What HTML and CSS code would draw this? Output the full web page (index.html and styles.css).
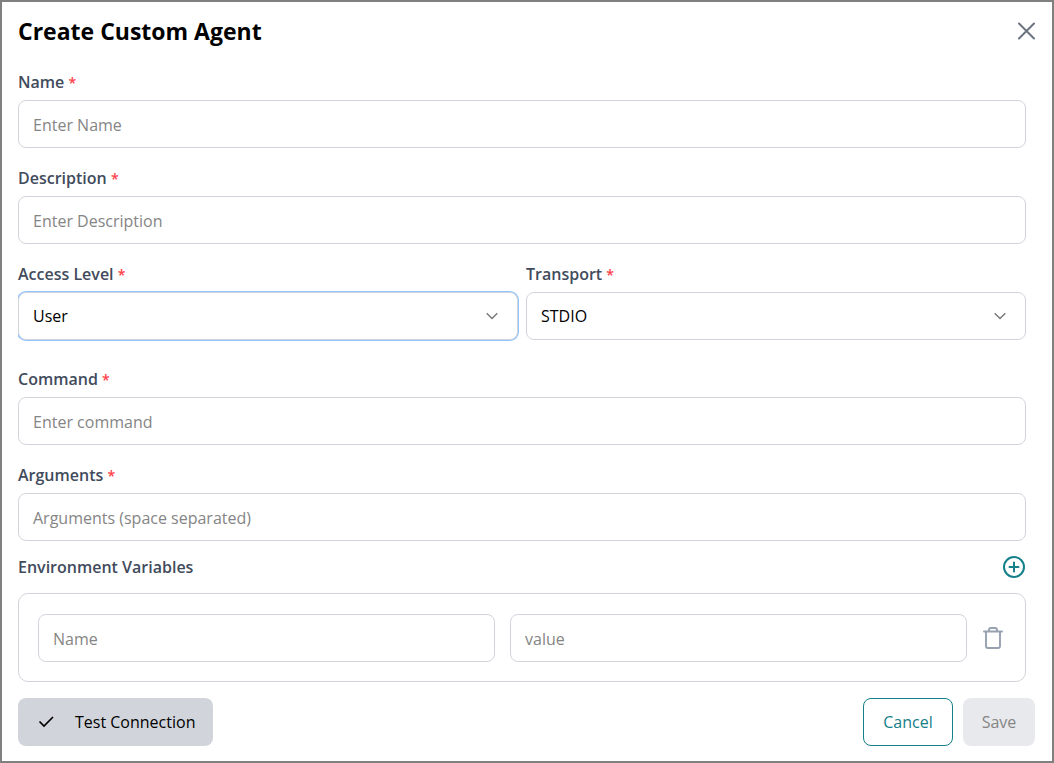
FILE: index.html
```html
<!DOCTYPE html>
<html lang="en">
<head>
<meta charset="utf-8">
<meta name="viewport" content="width=device-width, initial-scale=1">
<title>Create Custom Agent</title>
<link rel="stylesheet" href="styles.css">
</head>
<body>
<main class="dialog">
  <header class="dialog-header">
    <h1 class="title">Create Custom Agent</h1>
    <button class="icon-button close" type="button" aria-label="Close">
      <svg width="18" height="18" viewBox="0 0 18 18" fill="none" stroke="currentColor" stroke-width="2" stroke-linecap="round"><path d="M2 1.500l15 15M17 1.500l-15 15"/></svg>
    </button>
  </header>
  <form class="form">
    <div class="fields">
      <div class="field">
        <label class="label" for="name">Name <span class="required">*</span></label>
        <input class="control" id="name" type="text" placeholder="Enter Name">
      </div>
      <div class="field">
        <label class="label" for="description">Description <span class="required">*</span></label>
        <input class="control" id="description" type="text" placeholder="Enter Description">
      </div>
      <div class="field-row">
        <div class="field">
          <label class="label" for="access">Access Level <span class="required">*</span></label>
          <div class="select-wrap">
            <select class="control select active" id="access"><option>User</option></select>
            <svg class="chevron" width="12" height="8" viewBox="0 0 12 8" fill="none" stroke="currentColor" stroke-width="1.400"><path d="M.7 1.200L6 6.500l5.300-5.300"/></svg>
          </div>
        </div>
        <div class="field">
          <label class="label" for="transport">Transport <span class="required">*</span></label>
          <div class="select-wrap">
            <select class="control select" id="transport"><option>STDIO</option></select>
            <svg class="chevron" width="12" height="8" viewBox="0 0 12 8" fill="none" stroke="currentColor" stroke-width="1.400"><path d="M.7 1.200L6 6.500l5.300-5.300"/></svg>
          </div>
        </div>
      </div>
      <div class="field">
        <label class="label" for="command">Command <span class="required">*</span></label>
        <input class="control" id="command" type="text" placeholder="Enter command">
      </div>
      <div class="field">
        <label class="label" for="arguments">Arguments <span class="required">*</span></label>
        <input class="control" id="arguments" type="text" placeholder="Arguments (space separated)">
      </div>
    </div>
    <section class="env">
      <div class="env-header">
        <h2 class="label">Environment Variables</h2>
        <button class="icon-button add" type="button" aria-label="Add variable">
          <svg width="24" height="24" viewBox="0 0 24 24" fill="none" stroke="currentColor" stroke-width="2" stroke-linecap="round"><circle cx="12" cy="12" r="10"/><path d="M12 7.500v9M7.500 12h9"/></svg>
        </button>
      </div>
      <div class="env-box">
        <input class="control" type="text" placeholder="Name" aria-label="Variable name">
        <input class="control" type="text" placeholder="value" aria-label="Variable value">
        <button class="icon-button trash" type="button" aria-label="Delete variable">
          <svg width="24" height="24" viewBox="0 0 24 24" fill="none" stroke="currentColor" stroke-width="1.900" stroke-linecap="round" stroke-linejoin="round"><path d="M2 5.500h18M4 5.500v14.500a2 2 0 0 0 2 2h10a2 2 0 0 0 2-2V5.500M7 5.500V4a2 2 0 0 1 2-2h4a2 2 0 0 1 2 2v1.500"/></svg>
        </button>
      </div>
    </section>
    <footer class="footer">
      <button class="button test" type="button">
        <svg width="16" height="12" viewBox="0 0 16 12" fill="none" stroke="currentColor" stroke-width="1.700"><path d="M1.500 5.500l4.500 4.500L15 1"/></svg>
        Test Connection
      </button>
      <button class="button cancel" type="button">Cancel</button>
      <button class="button save" type="submit" disabled>Save</button>
    </footer>
  </form>
</main>
</body>
</html>
```
FILE: styles.css
```css
*, *::before, *::after { box-sizing: border-box; }

body {
  margin: 0;
  background: #fff;
  color: #000;
  font-family: "Open Sans", "Noto Sans", sans-serif;
  font-size: 16px;
  line-height: 24px;
}

button, input, select { font: inherit; }

.dialog {
  min-height: 100vh;
  padding: 13px 17px 15px 16px;
  border: 2px solid #808080;
}

.dialog-header {
  display: flex;
  align-items: center;
  justify-content: space-between;
  height: 32px;
  margin-bottom: 23px;
}

.title {
  margin: 0;
  font-size: 23px;
  font-weight: 700;
  line-height: 32px;
}

.icon-button {
  display: flex;
  flex: none;
  padding: 0;
  border: 0;
  background: none;
}

.close { color: #6b7280; }

.fields, .env { margin-right: 9px; }

.fields {
  display: flex;
  flex-direction: column;
  gap: 18px;
}

.field {
  display: flex;
  flex: 1;
  flex-direction: column;
  gap: 6px;
  min-width: 0;
}

.field-row {
  display: flex;
  gap: 8px;
  margin-bottom: 9px;
}

.label {
  margin: 0;
  color: #414b5c;
  font-size: 16px;
  font-weight: 600;
  line-height: 24px;
}

.required {
  color: #ff4047;
  font-size: 14px;
  line-height: 16px;
}

.control {
  width: 100%;
  min-width: 0;
  height: 48px;
  padding: 1px 14px 0;
  border: 1px solid #d1d5db;
  border-radius: 8px;
  outline: 0;
  background: #fff;
  color: #000;
}

.control::placeholder { color: #858585; opacity: 1; }

.select-wrap {
  display: grid;
  align-items: center;
}

.select-wrap > * { grid-area: 1 / 1; }

.select {
  padding-top: 0;
  appearance: none;
}

/* The focus ring is cut off at the left edge of the form. */
.active {
  box-shadow: 0 0 0 1px #93c5fd;
  clip-path: inset(-1px -1px -1px 0);
}

.chevron {
  z-index: 1;
  justify-self: end;
  margin-right: 20px;
  color: #777;
  pointer-events: none;
}

.env-header {
  display: flex;
  align-items: center;
  justify-content: space-between;
  margin: 14px 0;
}

.add { color: #15808a; }

.env-box {
  display: flex;
  align-items: center;
  gap: 15px;
  padding: 20px 19px 19px;
  border: 1px solid #d1d5db;
  border-radius: 10px;
}

.trash { color: #98a1b0; }

.footer {
  display: flex;
  gap: 10px;
  margin-top: 16px;
}

.button {
  display: flex;
  align-items: center;
  justify-content: center;
  height: 48px;
  padding: 0 18px;
  border: 1px solid transparent;
  border-radius: 8px;
}

.test {
  gap: 21px;
  margin-right: auto;
  padding: 0 17px 0 19px;
  background: #d1d5db;
  color: #000;
}

.cancel {
  min-width: 90px;
  border-color: #15808a;
  background: #fff;
  color: #15808a;
}

.save {
  min-width: 72px;
  padding: 0 16px;
  background: #e8e9ed;
  color: #858585;
}
```
